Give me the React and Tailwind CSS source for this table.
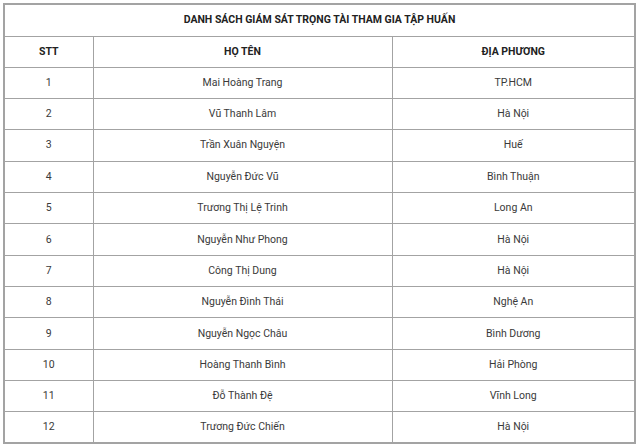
import React from "react";

const rows = [
  ["1", "Mai Hoàng Trang", "TP.HCM"],
  ["2", "Vũ Thanh Lâm", "Hà Nội"],
  ["3", "Trần Xuân Nguyện", "Huế"],
  ["4", "Nguyễn Đức Vũ", "Bình Thuận"],
  ["5", "Trương Thị Lệ Trinh", "Long An"],
  ["6", "Nguyễn Như Phong", "Hà Nội"],
  ["7", "Công Thị Dung", "Hà Nội"],
  ["8", "Nguyễn Đình Thái", "Nghệ An"],
  ["9", "Nguyễn Ngọc Châu", "Bình Dương"],
  ["10", "Hoàng Thanh Bình", "Hải Phòng"],
  ["11", "Đỗ Thành Đệ", "Vĩnh Long"],
  ["12", "Trương Đức Chiến", "Hà Nội"],
];

export default function App() {
  return (
    <div className="bg-white w-[640px] h-[446px] pt-[3px] pl-[3px] font-['Roboto',sans-serif] text-[10.5px] text-[#3a3a3a]">
      <table className="border-collapse w-[633px] border-2 border-[#a3a3a3]">
        <tbody>
          <tr className="h-[32px]">
            <td colSpan={3} className="border border-[#a3a3a3] text-center font-bold text-[#222]">
              DANH SÁCH GIÁM SÁT TRỌNG TÀI THAM GIA TẬP HUẤN
            </td>
          </tr>
          <tr className="h-[31px]">
            <td className="border border-[#a3a3a3] text-center font-bold text-[#222] w-[89px]">STT</td>
            <td className="border border-[#a3a3a3] text-center font-bold text-[#222] w-[299px]">HỌ TÊN</td>
            <td className="border border-[#a3a3a3] text-center font-bold text-[#222]">ĐỊA PHƯƠNG</td>
          </tr>
          {rows.map((r) => (
            <tr key={r[0]} className="h-[31.35px]">
              <td className="border border-[#a3a3a3] text-center">{r[0]}</td>
              <td className="border border-[#a3a3a3] text-center">{r[1]}</td>
              <td className="border border-[#a3a3a3] text-center">{r[2]}</td>
            </tr>
          ))}
        </tbody>
      </table>
    </div>
  );
}
